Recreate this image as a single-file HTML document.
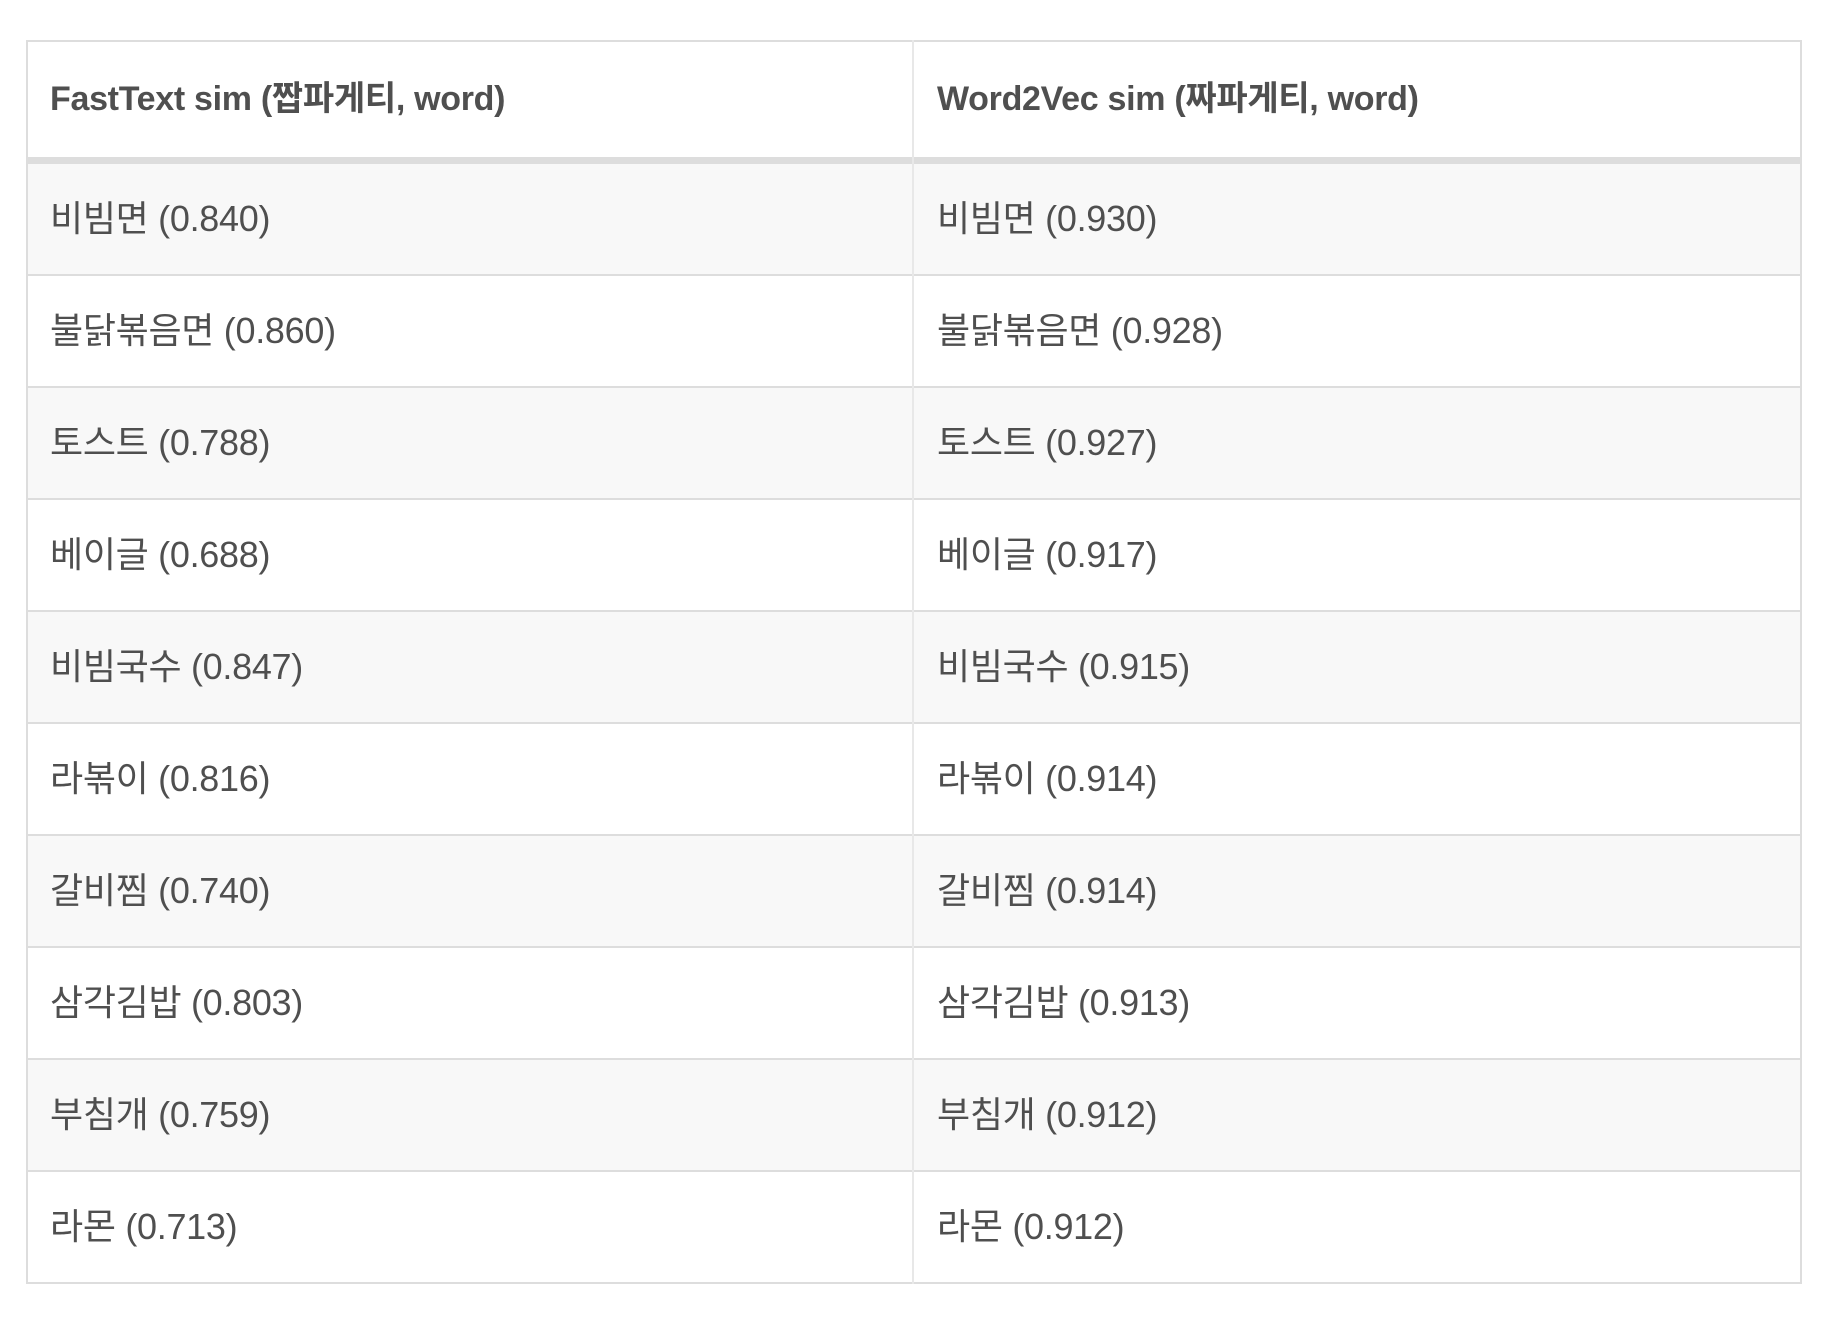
<!DOCTYPE html>
<html><head><meta charset="utf-8"><style>
body{margin:0;width:1831px;height:1322px;background:#fff;position:relative;overflow:hidden;font-family:"Liberation Sans","Noto Sans CJK KR",sans-serif;color:#4f4f4f}
.t{position:absolute;left:26px;top:40px;width:1776px;height:1244px;border:2px solid #ddd;box-sizing:border-box}
.vd{position:absolute;left:912px;top:40px;width:2px;height:1244px;background:#e8e8e8}
.hb{position:absolute;left:26px;top:157px;width:1776px;height:7px;background:#ddd}
.r{position:absolute;left:28px;width:1772px;height:110px;border-bottom:2px solid #ddd}
.c{position:absolute;font-size:36px;line-height:40px;white-space:nowrap;letter-spacing:-0.3px}
.h{font-weight:bold;font-size:34px}
</style></head><body>
<div class="t"></div>
<div class="hb"></div>
<div class="r" style="top:164px;background:#f8f8f8"></div>
<div class="r" style="top:276px"></div>
<div class="r" style="top:388px;background:#f8f8f8"></div>
<div class="r" style="top:500px"></div>
<div class="r" style="top:612px;background:#f8f8f8"></div>
<div class="r" style="top:724px"></div>
<div class="r" style="top:836px;background:#f8f8f8"></div>
<div class="r" style="top:948px"></div>
<div class="r" style="top:1060px;background:#f8f8f8"></div>
<div class="r" style="top:1172px;height:110px;border:none"></div>
<div class="vd"></div>
<div class="c h" style="left:50px;top:79px">FastText sim (짭파게티, word)</div>
<div class="c h" style="left:937px;top:79px">Word2Vec sim (짜파게티, word)</div>
<div class="c" style="left:50px;top:199px">비빔면 (0.840)</div><div class="c" style="left:937px;top:199px">비빔면 (0.930)</div>
<div class="c" style="left:50px;top:311px">불닭볶음면 (0.860)</div><div class="c" style="left:937px;top:311px">불닭볶음면 (0.928)</div>
<div class="c" style="left:50px;top:423px">토스트 (0.788)</div><div class="c" style="left:937px;top:423px">토스트 (0.927)</div>
<div class="c" style="left:50px;top:535px">베이글 (0.688)</div><div class="c" style="left:937px;top:535px">베이글 (0.917)</div>
<div class="c" style="left:50px;top:647px">비빔국수 (0.847)</div><div class="c" style="left:937px;top:647px">비빔국수 (0.915)</div>
<div class="c" style="left:50px;top:759px">라볶이 (0.816)</div><div class="c" style="left:937px;top:759px">라볶이 (0.914)</div>
<div class="c" style="left:50px;top:871px">갈비찜 (0.740)</div><div class="c" style="left:937px;top:871px">갈비찜 (0.914)</div>
<div class="c" style="left:50px;top:983px">삼각김밥 (0.803)</div><div class="c" style="left:937px;top:983px">삼각김밥 (0.913)</div>
<div class="c" style="left:50px;top:1095px">부침개 (0.759)</div><div class="c" style="left:937px;top:1095px">부침개 (0.912)</div>
<div class="c" style="left:50px;top:1207px">라몬 (0.713)</div><div class="c" style="left:937px;top:1207px">라몬 (0.912)</div>
</body></html>
